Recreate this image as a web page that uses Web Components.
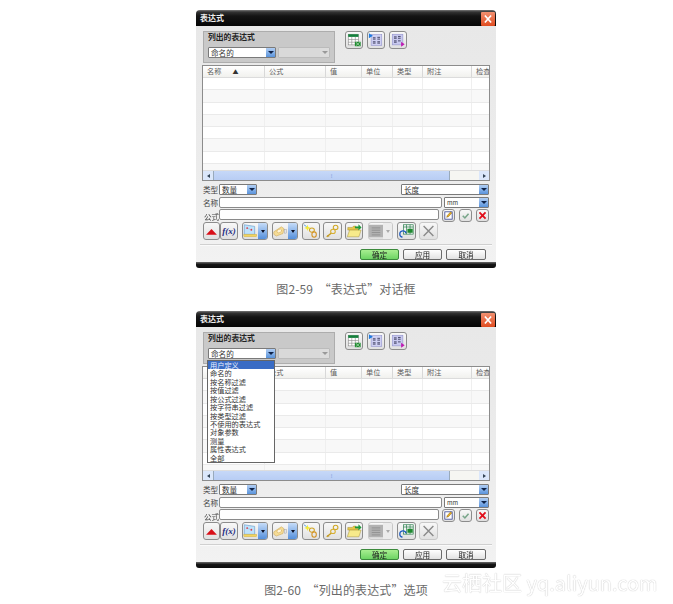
<!DOCTYPE html>
<html lang="zh"><head><meta charset="utf-8"><style>
html,body{margin:0;padding:0;background:#fff}
body{width:673px;height:604px;overflow:hidden;position:relative;font-family:"Noto Sans CJK SC","Noto Sans",sans-serif}
.col{display:flex;flex-direction:column;width:300px;margin-left:196px;padding-top:10px}
</style></head><body>
<script>
const S=(d)=>`<svg viewBox="0 0 18 18" width="100%" height="100%">${d}</svg>`;
const ICONS={
 table:S('<rect x="2.500" y="2.500" width="11.500" height="12" fill="#fff" stroke="#777" stroke-width=".6"/><rect x="2.500" y="2.500" width="11.500" height="3" fill="#14803c"/><path d="M2.500 8.500h11.500M2.500 11.500h11.500M6.500 5.500v9M10.500 5.500v9" stroke="#8a8a8a" stroke-width=".7"/><rect x="10" y="11" width="6.500" height="5" fill="#1f8a30"/><path d="M11 15.500l4.500-4M11 11.500l4.500 4" stroke="#cfeccf" stroke-width=".7"/>'),
 p1:S('<rect x="3.500" y="3" width="12" height="12" fill="#cfd0f2" stroke="#8a8ac8" stroke-width=".6"/><path d="M1 1.500l4.500 2.700L1 7z" fill="#1f7ae0"/><path d="M5.500 6.500h3M5.500 8h3M10.500 6h3M10.500 8h3M5.500 11h3M5.500 12.500h3M10.500 11h3M10.500 12.500h3" stroke="#2a2a4a" stroke-width=".9"/>'),
 p2:S('<rect x="2.500" y="2.500" width="12" height="12" fill="#c8c9ef" stroke="#8a8ac8" stroke-width=".6"/><path d="M4.500 5.500h3M4.500 7h3M9 5h3M9 7h3M4.500 10h3M4.500 11.500h3M9 10h3" stroke="#2a2a4a" stroke-width=".9"/><path d="M12.500 11v5.500l4-2.700z" fill="#c01ab0"/>'),
 up:S('<path d="M2.500 13.500L9 6.500l6.500 7z" fill="#d80f18"/>'),
 fx:'<span style="font:italic bold 9px \'Liberation Serif\',serif;color:#1c2a80;line-height:16px">f(x)</span>',
 sheet:S('<path d="M1.500 1.500L14 3.500v9.500H1.500z" fill="#bfe2fb" stroke="#5d95c8" stroke-width=".7"/><circle cx="5" cy="5.500" r="1.100" fill="#e8323c"/><circle cx="10" cy="7.500" r="1.100" fill="#e8323c"/><path d="M5 5.500L10 7.500" stroke="#7ab" stroke-width=".5"/><rect x="1" y="13" width="15.500" height="2.800" fill="#f3d560" stroke="#c8aa40" stroke-width=".5"/>'),
 tag:S('<path d="M1 10l9-6 3 2-1 6-8 3-3-2z" fill="#f5dc96" stroke="#c8a048" stroke-width=".6"/><ellipse cx="7.500" cy="9" rx="3" ry="2" fill="#fff5d8" stroke="#d0a850" stroke-width=".6" transform="rotate(-25 7.500 9)"/><rect x="13.500" y="7" width="3" height="4.500" fill="#e6e6e6" stroke="#999" stroke-width=".5"/>'),
 chain:S('<path d="M5 2l1 2.500 2.500 1-2.500 1L5 9 4 6.500l-2.500-1L4 4.500z" fill="#f4ec30"/><path d="M1 2l3 2" stroke="#4d9ade"/><ellipse cx="10" cy="8" rx="2.800" ry="2.400" fill="none" stroke="#d0a628" stroke-width="1.200"/><ellipse cx="12.500" cy="13" rx="2.500" ry="3" fill="none" stroke="#d49428" stroke-width="1.200"/>'),
 key:S('<ellipse cx="12.500" cy="5" rx="2.600" ry="2.400" fill="none" stroke="#d0a828" stroke-width="1.200"/><ellipse cx="9.500" cy="9.500" rx="2.600" ry="2.400" fill="none" stroke="#d8b030" stroke-width="1.200"/><path d="M7.500 11.500L2.500 15.500" stroke="#c49a1e" stroke-width="1.500"/><path d="M3.500 13.500l1.500 2" stroke="#c49a1e"/>'),
 folder:S('<path d="M2 5h5l1.500-1.500H11V6h3v2H2z" fill="#e8c848" stroke="#a08830" stroke-width=".5"/><path d="M1.500 15.500L4 8h13l-2.500 7.500z" fill="#f7ea8a" stroke="#a08830" stroke-width=".5"/><path d="M10 4h4V1.500L17.500 5 14 8.500V6h-4z" fill="#1f9a3a"/>'),
 list:S('<rect x="0" y="1" width="18" height="16" fill="#b2b2b2"/><path d="M3.500 5h11M3.500 8h11M3.500 11h11M3.500 14h11" stroke="#8a8a8a"/>'),
 link:S('<rect x="5.500" y="2" width="11" height="10.500" fill="#f4f4f4" stroke="#14733a" stroke-width=".7"/><path d="M5.500 4.500h11M9 2v10.500M13 2v10.500" stroke="#14733a" stroke-width=".7"/><rect x="10" y="6.500" width="6" height="4.500" fill="#1f8a30"/><path d="M8.500 11.500a3.600 3.600 0 1 0-4 4.500" fill="none" stroke="#1f5cc0" stroke-width="1.400"/>'),
 cross:S('<path d="M3.500 3.500l11 11M14.500 3.500l-11 11" stroke="#8a8a8a" stroke-width="1.600"/>'),
 edit:S('<rect x="3" y="3" width="12" height="12" fill="#fff" stroke="#26348c" stroke-width="1.200"/><path d="M6 12l1-3 5.500-6 2 2-5.500 6z" fill="#e8b020" stroke="#5a3a10" stroke-width=".6"/>'),
 check:S('<path d="M4.500 9.500l3.500 3.500 6-7" fill="none" stroke="#79a68a" stroke-width="2.600"/>'),
 xred:S('<path d="M4 4l10 10M14 4L4 14" stroke="#e2101c" stroke-width="3"/>')
};
class Base extends HTMLElement{
 render(css,html){this.attachShadow({mode:'open'}).innerHTML=`<style>${css}</style>${html}`}
}
class XCombo extends Base{connectedCallback(){
 const dis=this.hasAttribute('disabled');
 this.render(`:host{box-sizing:border-box;height:11px;width:var(--w,60px);flex:none;position:relative;border:1px solid ${dis?'#bbb':'#7a7a7a'};border-radius:1px;background:${dis?'#d9d9d9':'#fff'};display:flex;font-size:var(--fs,7.600px);line-height:9px;color:#333}
 .t{flex:1;padding-left:2px;white-space:nowrap;overflow:hidden}
 .a{width:9px;flex:none;display:flex;align-items:center;justify-content:center;background:${dis?'#dcdcdc':'linear-gradient(#b0cef4,#5b94dc)'}}
 .a i{width:0;height:0;border:3px solid transparent;border-top:3.500px solid ${dis?'#999':'#0e2248'};border-bottom:0}`,
 `<span class="t"><slot></slot></span><span class="a"><i></i></span>`);
}}
class XInput extends Base{connectedCallback(){
 this.render(`:host{display:block;box-sizing:border-box;height:11px;width:var(--w);flex:none;background:#fff;border:1px solid #8a8a8a;border-radius:2px}`,``);
}}
class XTool extends Base{connectedCallback(){
 const n=this.getAttribute('icon'),w=this.getAttribute('w')||18,h=this.getAttribute('h')||18,split=this.hasAttribute('split');
 const dis=this.hasAttribute('disabled');
 this.render(`:host{display:flex;box-sizing:border-box;flex:none;width:${w}px;height:${h}px;border:1px solid ${dis?'#c8c8c8':'#8c8c8c'};border-radius:3px;background:linear-gradient(#f8f8f8,#e0e0e0);overflow:hidden;text-align:center}
 .i{flex:1;min-width:0;display:flex;align-items:center;justify-content:center}
 .s{width:9px;flex:none;background:linear-gradient(#c6dcf8,#5590dc);display:flex;align-items:center;justify-content:center}
 .s.d{background:#ececec}
 .s i{width:0;height:0;border:2.500px solid transparent;border-top:3px solid #0c142a;border-bottom:0}.s.d i{border-top-color:#aaa}`,
 `<span class="i">${ICONS[n]}</span>${split?`<span class="s ${dis?'d':''}"><i></i></span>`:''}`);
}}
class XPush extends Base{connectedCallback(){
 const p=this.hasAttribute('primary');
 this.render(`:host{display:block;box-sizing:border-box;width:var(--w,40px);height:11px;flex:none;border:1px solid ${p?'#3c8a3c':'#6a6a6a'};border-radius:2px;background:${p?'linear-gradient(#a8ee90,#6ed464)':'linear-gradient(#fff,#e2e2e2)'};text-align:center;font-size:7.600px;line-height:9px;color:#222}`,`<slot></slot>`);
}}
class XTable extends Base{connectedCallback(){
 const cols=[['名称<i>▲</i>',62],['公式',61],['值',36],['单位',31],['类型',30],['附注',49],['检查',18]];
 const tpl=cols.map(c=>c[1]+'px').join(' ');
 let rows='';
 for(let i=0;i<9;i++){rows+=`<div class="r ${i%2?'alt':''}">${cols.map(()=>'<span></span>').join('')}</div>`}
 this.render(`:host{display:flex;flex-direction:column;box-sizing:border-box;width:288px;height:var(--th,116px);border:1px solid #8c8c8c;background:#fff;overflow:hidden;flex:none}
 .r,.h{display:grid;grid-template-columns:${tpl};flex:none}
 .h{height:11px;background:linear-gradient(#fff,#f1f1ee);font-size:7.200px;line-height:10px;color:#5c5c5c;border-bottom:1px solid #dcdcdc;box-sizing:content-box}
 .h span{border-right:1px solid #d8d8d8;padding-left:4px;white-space:nowrap;overflow:hidden}
 .h i{font-style:normal;font-size:6px;margin-left:11px;color:#333}
 .body{flex:1;min-height:0;overflow:hidden}
 .r{height:12.300px;box-sizing:border-box;border-bottom:1px solid #eaeaea}.r.alt{background:#f8f8f8}
 .r span{border-right:1px solid #efefef}
 .sb{height:10px;flex:none;display:flex;align-items:center;background:#f6f6f2;border-top:1px solid #ddd;box-sizing:border-box}
 .e{width:10px;height:100%;display:flex;align-items:center;justify-content:center;background:#dbe7fa;flex:none}
 .e i{width:0;height:0;border:2.500px solid transparent}
 .e.l i{border-right:3px solid #345;border-left:0}.e.rr i{border-left:3px solid #345;border-right:0}
 .th{width:237px;height:100%;background:linear-gradient(#c6d8f8,#b8cdf4);border:0 solid #9ab;border-width:0 1px;box-sizing:border-box;display:flex;align-items:center;justify-content:center;color:#7f9bd6;font-size:6px;line-height:8px}
 .sp{flex:1}`,
 `<div class="h">${cols.map(c=>`<span>${c[0]}</span>`).join('')}</div><div class="body">${rows}</div>
 <div class="sb"><span class="e l"><i></i></span><span class="th">⁞</span><span class="sp"></span><span class="e rr"><i></i></span></div>`);
}}
class XMenu extends Base{connectedCallback(){
 const items=['用户定义','命名的','按名称过滤','按值过滤','按公式过滤','按字符串过滤','按类型过滤','不使用的表达式','对象参数','测量','属性表达式','全部'];
 this.render(`:host{position:absolute;left:11px;top:49px;z-index:5;box-sizing:border-box;width:68px;height:103px;background:#fff;border:1px solid #666;font-size:7.200px;color:#333;display:grid;grid-auto-rows:1fr}
 div{padding-left:2px;white-space:nowrap;line-height:8px;height:8.400px}div:first-of-type{background:#3a6cc4;color:#e8f0ff}`,
 items.map(t=>`<div>${t}</div>`).join(''));
}}
class XDialog extends Base{connectedCallback(){
 const open=this.hasAttribute('open');
 const th=this.getAttribute('table-h')||'116px';
 this.render(`:host{display:flex;flex-direction:column;position:relative;width:300px;height:var(--h,258px);flex:none;box-sizing:border-box;font-size:7.600px;color:#333;filter:blur(.42px);background:#ececec;border-radius:4px 4px 3px 3px;overflow:hidden}
 .title{height:16px;flex:none;box-sizing:border-box;background:linear-gradient(#777 0,#333 2px,#141414 6px,#050505 100%);color:#eee;font-size:8px;font-weight:700;line-height:15px;padding-left:4px;display:flex;justify-content:space-between}
 .close{width:14px;height:14px;margin:1.500px 1px 0 0;background:linear-gradient(#f29070,#e04c20);box-sizing:border-box;border-radius:1px;display:block}
 .main{flex:1;min-height:0;padding:5px 6px 0;display:flex;flex-direction:column;background:linear-gradient(#e8e8e8,#ececec 60%,#f2f2f2);box-sizing:border-box}
 .top{display:flex;height:32px;flex:none;margin-left:1px}
 .grp{width:132px;height:32px;box-sizing:border-box;background:#c9c9c9;border:1px solid #adadad;padding:0 4px;font-weight:700;font-size:7.800px;line-height:9px;margin-right:10px;flex:none;color:#222}
 .grp .rw{display:flex;gap:2px;margin-top:6px;font-weight:400}
 .ics{display:flex;gap:4px}
 .tb{margin-top:2px;flex:none}
 .l1{display:flex;align-items:center;margin-top:2px;height:12px;flex:none;color:#444}
 .lb{width:17px;flex:none;white-space:nowrap;padding-left:1px;box-sizing:border-box}
 .sp{flex:1}
 .l3{position:relative}
 .lf{position:absolute;left:1px;top:3px;height:9px;line-height:9px;overflow:hidden}
 .lbtn{display:flex;gap:4px;margin-left:3px}
 .tools{display:flex;margin-top:1px;height:18px;flex:none;margin-left:1px}
 hr{border:0;border-top:1px solid #d0d0d0;border-bottom:1px solid #fafafa;margin:4px 0 3px -2px;width:292px;height:0;flex:none}
 .btns{display:flex;justify-content:flex-end;gap:4px;height:11px;padding-right:4px;flex:none}
 .foot{height:6px;flex:none;background:linear-gradient(#6a6a6a,#161616 40%,#0c0c0c)}`,
 `<div class="title"><span>表达式</span><span class="close">${S('<path d="M5 4.500l8 9M13 4.500l-8 9" stroke="#fff" stroke-width="2.200"/>')}</span></div>
 <div class="main">
  <div class="top"><div class="grp">列出的表达式<div class="rw"><x-combo style="--w:68px">命名的</x-combo><x-combo style="--w:52px" disabled></x-combo></div></div>
  <div class="ics"><x-tool icon="table"></x-tool><x-tool icon="p1"></x-tool><x-tool icon="p2"></x-tool></div></div>
  <div class="tb"><x-table style="--th:${th}"></x-table></div>
  <div class="l1"><span class="lb">类型</span><x-combo style="--w:38px">数量</x-combo><span class="sp"></span><x-combo style="--w:88px;margin-right:1px">长度</x-combo></div>
  <div class="l1" style="margin-top:1px"><span class="lb">名称</span><x-input style="--w:223px"></x-input><x-combo style="--w:45px;margin-left:2px;--fs:6px">mm</x-combo></div>
  <div class="l1 l3" style="margin-top:1px;height:12px;align-items:flex-start"><span class="lb lf">公式</span><x-input style="--w:220px;margin-left:17px"></x-input><div class="lbtn"><x-tool icon="edit" w="13" h="13"></x-tool><x-tool icon="check" w="13" h="13"></x-tool><x-tool icon="xred" w="13" h="13"></x-tool></div></div>
  <div class="tools"><x-tool icon="up" w="17"></x-tool><x-tool icon="fx" style="margin-right:4px"></x-tool><x-tool icon="sheet" w="26" split style="margin-right:4px"></x-tool><x-tool icon="tag" w="26" split style="margin-right:4px"></x-tool><x-tool icon="chain" style="margin-right:3px"></x-tool><x-tool icon="key" w="19" style="margin-right:3px"></x-tool><x-tool icon="folder" style="margin-right:5px"></x-tool><x-tool icon="list" w="25" split disabled style="margin-right:4px"></x-tool><x-tool icon="link" w="19" style="margin-right:3px"></x-tool><x-tool icon="cross" w="19" disabled></x-tool></div>
  <hr>
  <div class="btns"><x-push primary style="--w:39px">确定</x-push><x-push style="--w:39px">应用</x-push><x-push style="--w:40px">取消</x-push></div>
  <span class="sp"></span>
 </div>
 <div class="foot"></div>${open?'<x-menu></x-menu>':''}`);
}}
class XCaption extends Base{connectedCallback(){
 this.render(`:host{display:block;text-align:center;font-size:12px;line-height:16px;color:#6a6a6a;white-space:pre;letter-spacing:.12px}`,`<slot></slot>`);
}}
class XMark extends Base{connectedCallback(){
 this.render(`:host{position:absolute;left:442px;top:569px;font-size:20px;line-height:28px;color:#fff;white-space:nowrap;text-shadow:0 0 1px #c4c4c4,0 0 1px #d4d4d4;font-family:"Noto Sans CJK SC","Open Sans",sans-serif;display:block}`,`<slot></slot>`);
}}
for(const [n,c] of Object.entries({'x-combo':XCombo,'x-input':XInput,'x-tool':XTool,'x-push':XPush,'x-table':XTable,'x-menu':XMenu,'x-dialog':XDialog,'x-caption':XCaption,'x-mark':XMark}))customElements.define(n,c);
</script>
<div class="col">
<x-dialog style="--h:258px" table-h="116px"></x-dialog>
<x-caption style="margin-top:13px">图2-59  “表达式”对话框</x-caption>
<x-dialog open style="--h:257px;margin-top:14px" table-h="115px"></x-dialog>
<x-caption style="margin-top:14px">图2-60  “列出的表达式”选项</x-caption>
</div>
<x-mark>云栖社区 yq.aliyun.com</x-mark>
</body></html>
